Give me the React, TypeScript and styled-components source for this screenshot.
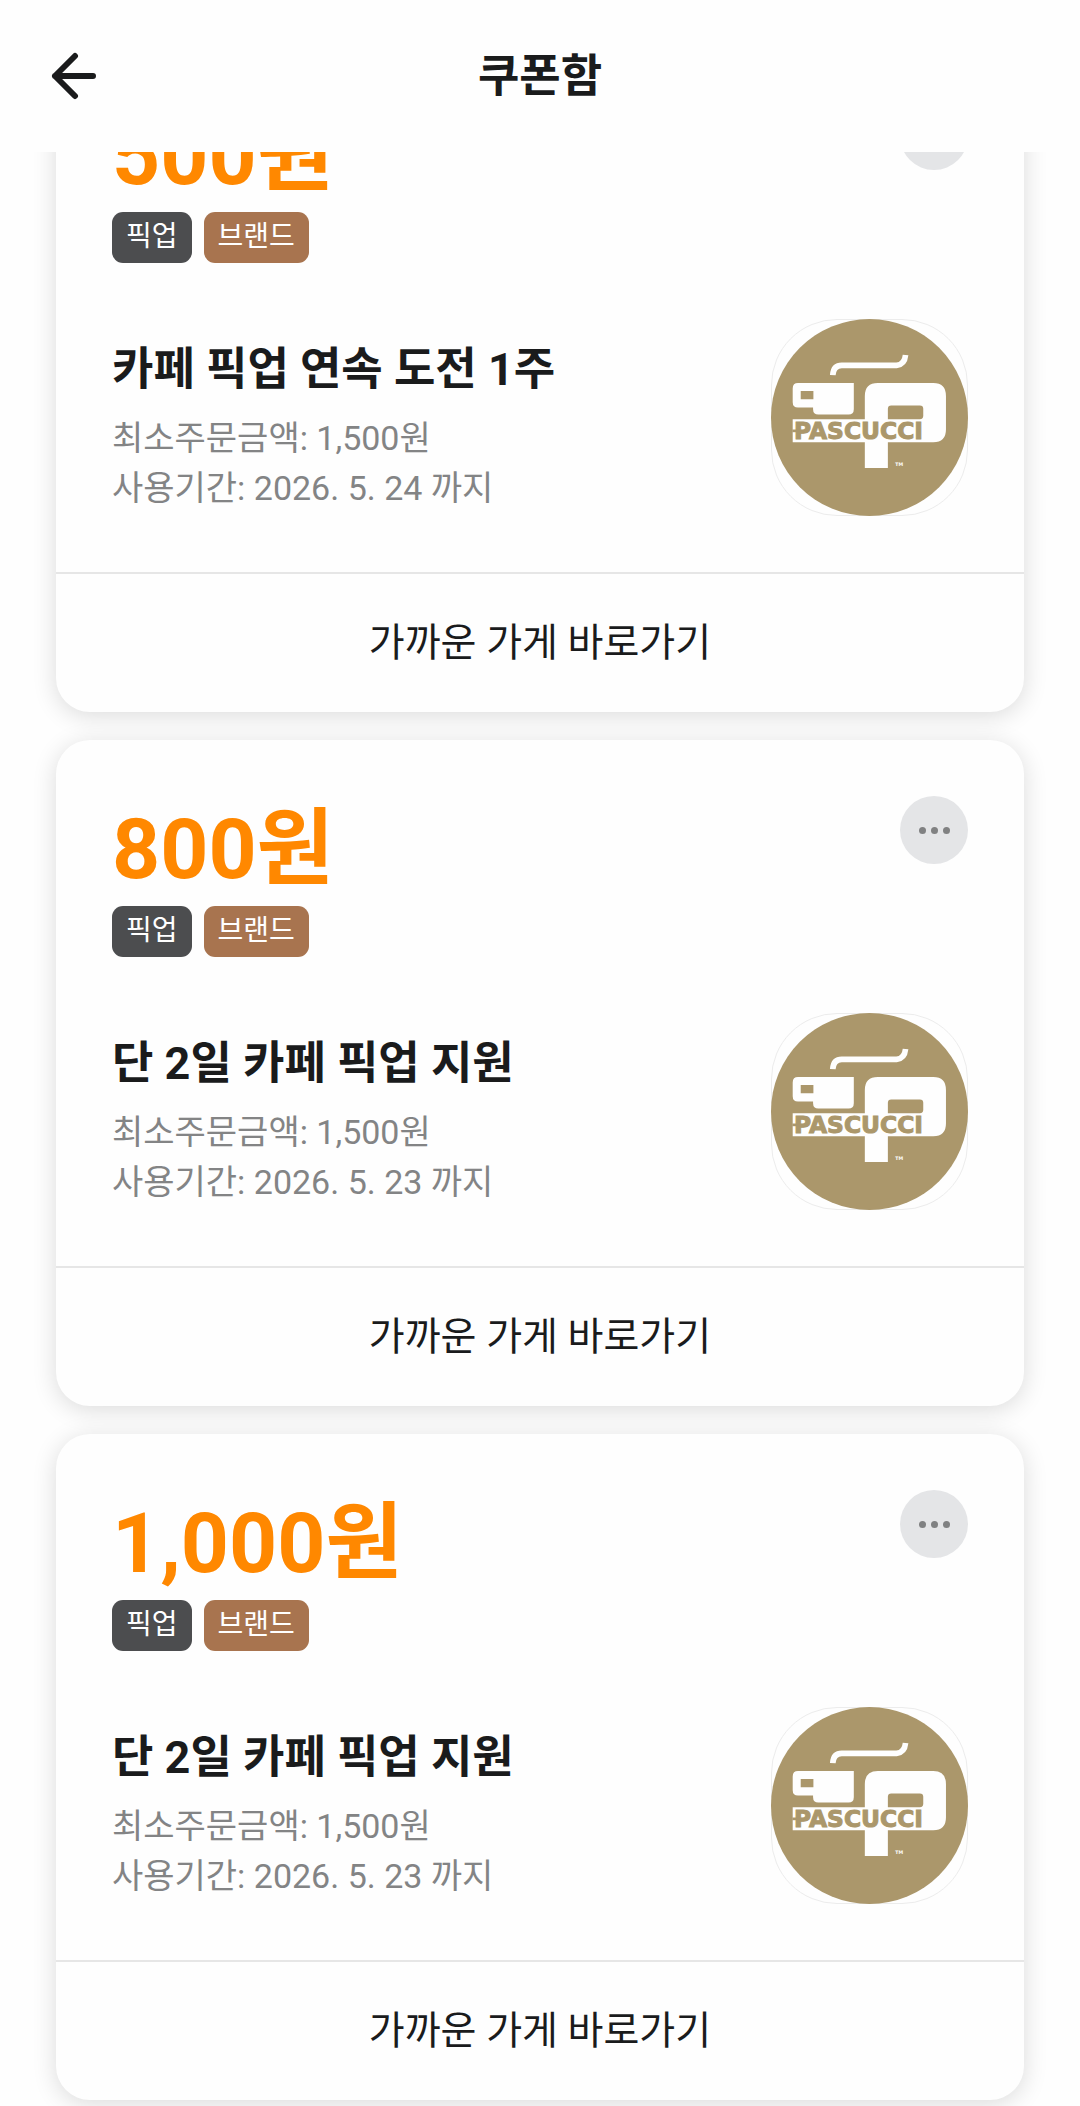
import React, { useLayoutEffect, useRef } from "react";
import styled, { createGlobalStyle } from "styled-components";

const GlobalStyle = createGlobalStyle`
  * { box-sizing: border-box; }
  body {
    margin: 0;
    background: #fefefe;
    color: #1a1b1c;
    font-family: Roboto, "Noto Sans CJK KR", sans-serif;
  }
  button { font: inherit; color: inherit; border: 0; padding: 0; background: none; cursor: pointer; }
  h1, h2, p, ul { margin: 0; padding: 0; }
`;

const Screen = styled.div`
  display: flex;
  flex-direction: column;
  height: 100vh;
`;

const Header = styled.header`
  display: grid;
  grid-template-columns: 48px 1fr 48px;
  align-items: center;
  flex: none;
  height: 152px;
  padding: 0 50px;
  background: #fefefe;
`;

const BackButton = styled.button`
  display: flex;
  width: 48px;
  height: 48px;
`;

const PageTitle = styled.h1`
  padding-top: 2px;
  font-size: 45px;
  line-height: 64px;
  font-weight: 700;
  text-align: center;
`;

const Scroller = styled.main`
  flex: 1;
  min-height: 0;
  overflow-y: auto;
  scrollbar-width: none;
`;

const CouponList = styled.ul`
  display: flex;
  flex-direction: column;
  gap: 28px;
  padding: 0 56px 56px;
  list-style: none;
`;

const Card = styled.li`
  border-radius: 34px;
  background: #fefefe;
  box-shadow: 0 4px 24px rgba(0, 0, 0, 0.14);
`;

const CardBody = styled.div`
  display: flex;
  flex-direction: column;
  gap: 56px;
  padding: 56px;
`;

const Row = styled.div`
  display: flex;
  justify-content: space-between;
  align-items: flex-start;
`;

const Price = styled.p`
  font-size: 84px;
  line-height: 108px;
  font-weight: 700;
  color: #ff8800;
`;

const Tags = styled.div`
  display: flex;
  gap: 12px;
  margin-top: 2px;
`;

const Tag = styled.span<{ $color: string }>`
  height: 51px;
  padding: 0 14px;
  border-radius: 11px;
  background: ${(p) => p.$color};
  color: #fff;
  font-size: 28px;
  line-height: 50px;
`;

const MoreButton = styled.button`
  display: flex;
  align-items: center;
  justify-content: center;
  gap: 5px;
  width: 68px;
  height: 68px;
  border-radius: 50%;
  background: #e4e5e7;
`;

const Dot = styled.span`
  width: 7px;
  height: 7px;
  border-radius: 50%;
  background: #808182;
`;

const Info = styled.div`
  padding-top: 21px;
`;

const CouponName = styled.h2`
  margin-bottom: 13px;
  font-size: 45px;
  line-height: 60px;
  font-weight: 700;
`;

const Condition = styled.p`
  font-size: 34px;
  line-height: 50px;
  color: #838485;
`;

const LogoFrame = styled.div`
  flex: none;
  width: 197px;
  height: 197px;
  border: 1px solid #ececec;
  border-radius: 66px;

  svg {
    display: block;
    margin: -1px;
  }
`;

const StoreButton = styled.button`
  display: block;
  width: 100%;
  height: 140px;
  border-top: 2px solid #e6e6e6;
  font-size: 39px;
  line-height: 56px;
`;

const BRAND = "#ab976b";

function PascucciLogo() {
  return (
    <svg width="197" height="197" viewBox="94 87 590 590" role="img" aria-label="PASCUCCI">
      <circle cx="389" cy="382" r="295" fill={BRAND} />
      <path d="M279 255 Q281 226 306 226 H470 Q494 224 497 195" fill="none" stroke="#fefefe" strokeWidth="17" />
      <path
        fillRule="evenodd"
        fill="#fefefe"
        d="M175 279 H342 V357 Q342 373 326 373 H236 Q220 373 220 357 V352 H175 Q159 352 159 336 V295 Q159 279 175 279 Z M183 303 V327 H221 V303 Z"
      />
      <path
        fillRule="evenodd"
        fill="#fefefe"
        d="M159 387 H375 V318 Q375 279 414 279 H580 Q618 279 618 318 V418 Q618 456 580 456 H444 V533 H375 V456 H159 Z M444 387 H540 Q550 387 550 377 V356 Q550 346 540 346 H454 Q444 346 444 356 Z"
      />
      <path d="M158 422 H174" stroke={BRAND} strokeWidth="8" />
      <text
        x="163"
        y="447"
        fill={BRAND}
        stroke={BRAND}
        strokeWidth="3"
        fontFamily="'DejaVu Sans', sans-serif"
        fontWeight="700"
        fontSize="70"
      >
        PASCUCCI
      </text>
      <text x="466" y="528" fill="#fefefe" fontFamily="'DejaVu Sans', sans-serif" fontWeight="700" fontSize="14">
        TM
      </text>
    </svg>
  );
}

type Coupon = { amount: string; name: string; until: string };

const COUPONS: Coupon[] = [
  { amount: "500원", name: "카페 픽업 연속 도전 1주", until: "2026. 5. 24" },
  { amount: "800원", name: "단 2일 카페 픽업 지원", until: "2026. 5. 23" },
  { amount: "1,000원", name: "단 2일 카페 픽업 지원", until: "2026. 5. 23" },
];

function CouponCard({ coupon }: { coupon: Coupon }) {
  return (
    <Card>
      <CardBody>
        <Row>
          <div>
            <Price>{coupon.amount}</Price>
            <Tags>
              <Tag $color="#4c4d4f">픽업</Tag>
              <Tag $color="#a8744f">브랜드</Tag>
            </Tags>
          </div>
          <MoreButton type="button" aria-label="더보기">
            <Dot />
            <Dot />
            <Dot />
          </MoreButton>
        </Row>
        <Row>
          <Info>
            <CouponName>{coupon.name}</CouponName>
            <Condition>최소주문금액: 1,500원</Condition>
            <Condition>사용기간: {coupon.until} 까지</Condition>
          </Info>
          <LogoFrame>
            <PascucciLogo />
          </LogoFrame>
        </Row>
      </CardBody>
      <StoreButton type="button">가까운 가게 바로가기</StoreButton>
    </Card>
  );
}

export default function App() {
  const scroller = useRef<HTMLElement>(null);

  // The list opens part-way into the first coupon.
  useLayoutEffect(() => {
    if (scroller.current) scroller.current.scrollTop = 106;
  }, []);

  return (
    <Screen>
      <GlobalStyle />
      <Header>
        <BackButton type="button" aria-label="뒤로">
          <svg width="48" height="48" viewBox="0 0 48 48" fill="none" stroke="#1a1b1c" strokeWidth="6" strokeLinecap="round" strokeLinejoin="round">
            <path d="M25 4 L5 24 L25 44 M5 24 H43" />
          </svg>
        </BackButton>
        <PageTitle>쿠폰함</PageTitle>
      </Header>
      <Scroller ref={scroller}>
        <CouponList>
          {COUPONS.map((coupon) => (
            <CouponCard key={coupon.amount} coupon={coupon} />
          ))}
        </CouponList>
      </Scroller>
    </Screen>
  );
}
